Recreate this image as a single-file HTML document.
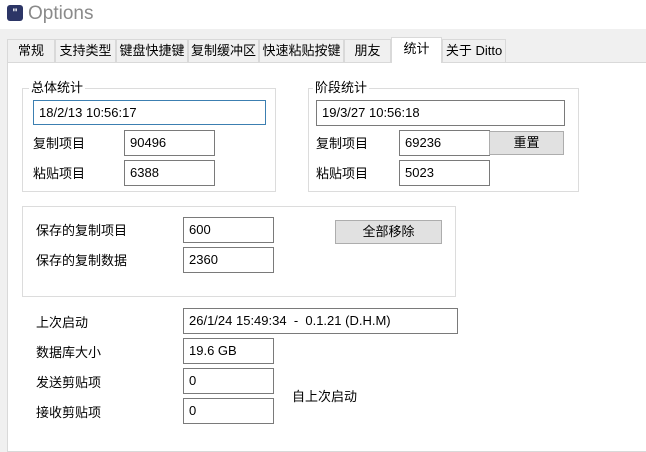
<!DOCTYPE html>
<html><head><meta charset="utf-8"><style>
*{margin:0;padding:0;box-sizing:border-box}
body{width:646px;height:441px;overflow:hidden;background:#f0f0f0;font-family:"Liberation Sans","Noto Sans CJK SC",sans-serif;font-size:13px;color:#000;position:relative}
.a{position:absolute}
.title{left:0;top:0;width:646px;height:29px;background:#fff}
.tab{position:absolute;top:39px;height:23px;border:1px solid #d9d9d9;border-bottom:none;background:#f0f0f0;line-height:22px;text-align:center;font-size:13px}
.panel{left:7px;top:62px;width:650px;height:390px;background:#fff;border:1px solid #d9d9d9}
.grp{position:absolute;border:1px solid #dcdcdc}
.gl{position:absolute;background:#fff;padding:0 2px;font-size:13px;line-height:14px}
.in{position:absolute;border:1px solid #7a7a7a;background:#fff;padding-left:5px;line-height:24px;font-size:13px}
.lb{position:absolute;font-size:13px;line-height:16px}
.btn{position:absolute;background:#e1e1e1;border:1px solid #adadad;text-align:center;line-height:22px;font-size:13px}
</style></head><body>
<div class="a title"></div>
<div class="a" style="left:7px;top:5px;width:16px;height:16px;background:#2c3566;border-radius:3px;color:#fff;font-size:11px;font-weight:bold;line-height:16px;text-align:center">"</div>
<div class="a" style="left:28px;top:1px;font-size:19px;color:#8a8a8a;line-height:26px">Options</div>

<div class="a panel"></div>
<div class="tab" style="left:7px;width:48px">常规</div>
<div class="tab" style="left:55px;width:61px">支持类型</div>
<div class="tab" style="left:116px;width:72px">键盘快捷键</div>
<div class="tab" style="left:188px;width:71px">复制缓冲区</div>
<div class="tab" style="left:259px;width:85px">快速粘贴按键</div>
<div class="tab" style="left:344px;width:47px">朋友</div>
<div class="tab" style="left:391px;top:37px;height:26px;width:51px;background:#fff;line-height:21px">统计</div>
<div class="tab" style="left:442px;width:64px">关于 Ditto</div>

<div class="grp" style="left:22px;top:88px;width:254px;height:104px"></div>
<div class="gl" style="left:29px;top:81px">总体统计</div>
<div class="in" style="left:33px;top:100px;width:233px;height:25px;border-color:#3c7fb1">18/2/13 10:56:17</div>
<div class="lb" style="left:33px;top:136px">复制项目</div>
<div class="in" style="left:124px;top:130px;width:91px;height:26px">90496</div>
<div class="lb" style="left:33px;top:166px">粘贴项目</div>
<div class="in" style="left:124px;top:160px;width:91px;height:26px">6388</div>

<div class="grp" style="left:308px;top:88px;width:271px;height:104px"></div>
<div class="gl" style="left:313px;top:81px">阶段统计</div>
<div class="in" style="left:316px;top:100px;width:249px;height:26px">19/3/27 10:56:18</div>
<div class="lb" style="left:316px;top:136px">复制项目</div>
<div class="in" style="left:399px;top:130px;width:91px;height:26px">69236</div>
<div class="btn" style="left:489px;top:131px;width:75px;height:24px">重置</div>
<div class="lb" style="left:316px;top:166px">粘贴项目</div>
<div class="in" style="left:399px;top:160px;width:91px;height:26px">5023</div>

<div class="grp" style="left:22px;top:206px;width:434px;height:91px"></div>
<div class="lb" style="left:36px;top:223px">保存的复制项目</div>
<div class="in" style="left:183px;top:217px;width:91px;height:26px">600</div>
<div class="lb" style="left:36px;top:253px">保存的复制数据</div>
<div class="in" style="left:183px;top:247px;width:91px;height:26px">2360</div>
<div class="btn" style="left:335px;top:220px;width:107px;height:24px">全部移除</div>

<div class="lb" style="left:36px;top:315px">上次启动</div>
<div class="in" style="left:183px;top:308px;width:275px;height:26px">26/1/24 15:49:34&nbsp; - &nbsp;0.1.21 (D.H.M)</div>
<div class="lb" style="left:36px;top:345px">数据库大小</div>
<div class="in" style="left:183px;top:338px;width:91px;height:26px">19.6 GB</div>
<div class="lb" style="left:36px;top:375px">发送剪贴项</div>
<div class="in" style="left:183px;top:368px;width:91px;height:26px">0</div>
<div class="lb" style="left:36px;top:405px">接收剪贴项</div>
<div class="in" style="left:183px;top:398px;width:91px;height:26px">0</div>
<div class="lb" style="left:292px;top:389px">自上次启动</div>
</body></html>
